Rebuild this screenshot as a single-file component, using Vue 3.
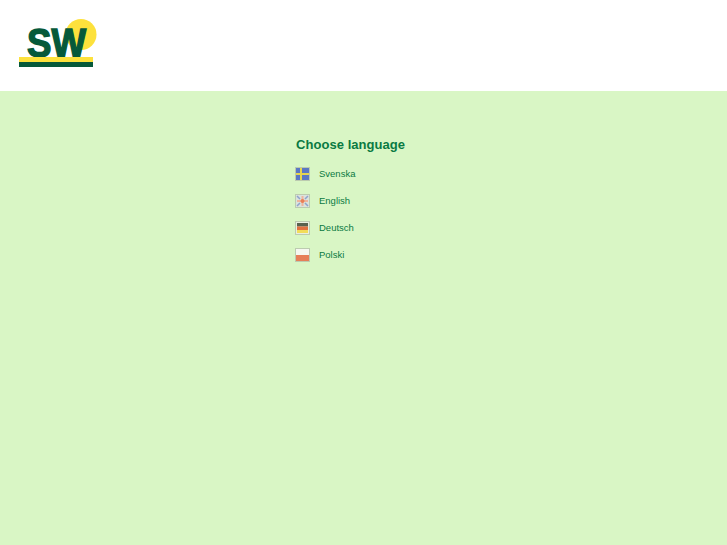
<script setup>
const languages = [
  { name: 'Svenska', code: 'se' },
  { name: 'English', code: 'en' },
  { name: 'Deutsch', code: 'de' },
  { name: 'Polski', code: 'pl' },
]
</script>

<template>
  <div class="page">
    <header class="header">
      <svg class="logo" width="78" height="50" viewBox="0 0 78 50">
        <circle cx="62" cy="15.5" r="15.5" fill="#fde13c" />
        <text x="8" y="37.5" class="logo-text" textLength="59" lengthAdjust="spacingAndGlyphs">SW</text>
        <rect x="0" y="38" width="74" height="5" fill="#fde13c" />
        <rect x="0" y="43" width="74" height="5" fill="#06593a" />
      </svg>
    </header>
    <main class="main">
      <section class="chooser">
        <h1 class="title">Choose language</h1>
        <ul class="list">
          <li v-for="l in languages" :key="l.code" class="item">
            <svg class="flag" width="15" height="14" viewBox="0 0 15 14">
              <rect width="15" height="14" fill="#bccbb0" />
              <g v-if="l.code === 'se'">
                <rect x="1" y="1" width="13" height="12" fill="#5b78c4" />
                <rect x="5" y="1" width="2" height="12" fill="#e6d550" />
                <rect x="1" y="6" width="13" height="2" fill="#e6d550" />
              </g>
              <g v-else-if="l.code === 'en'">
                <rect x="1" y="1" width="13" height="12" fill="#dbe3dc" />
                <path d="M2 2l3 3M13 2l-3 3M2 12l3-3M13 12l-3-3" stroke="#8ea3cc" stroke-width="1.5" />
                <path d="M7.5 2v10M2 7h11" stroke="#eeb59e" stroke-width="2" />
                <circle cx="7.5" cy="7" r="2" fill="#e87f58" />
              </g>
              <g v-else-if="l.code === 'de'">
                <rect x="1" y="1" width="13" height="12" fill="#e9efe0" />
                <rect x="2" y="2" width="11" height="3.5" fill="#59614e" />
                <rect x="2" y="5.5" width="11" height="3.5" fill="#e2703f" />
                <rect x="2" y="9" width="11" height="3" fill="#f2dc5a" />
              </g>
              <g v-else>
                <rect x="1" y="1" width="13" height="6" fill="#f6f8f0" />
                <rect x="1" y="7" width="13" height="6" fill="#e67f58" />
              </g>
            </svg>
            <a class="link" href="#">{{ l.name }}</a>
          </li>
        </ul>
      </section>
    </main>
  </div>
</template>

<style>
html, body { margin: 0; padding: 0; }
</style>

<style scoped>
.page {
  width: 727px;
  height: 545px;
  overflow: hidden;
  display: flex;
  flex-direction: column;
  font-family: "Liberation Sans", Arial, sans-serif;
  color: #0a7a42;
}
.header {
  height: 91px;
  background: #fff;
  padding: 19px 0 0 19px;
  box-sizing: border-box;
}
.logo { display: block; }
.logo-text {
  font-family: "Liberation Sans", Arial, sans-serif;
  font-weight: 700;
  font-size: 41px;
  fill: #06593a;
  stroke: #06593a;
  stroke-width: 1.5px;
}
.main {
  flex: 1;
  background: #d9f6c5;
  padding: 46px 0 0 295px;
}
.title {
  margin: 0 0 0 1px;
  font-size: 13px;
  line-height: 16px;
  font-weight: 700;
  letter-spacing: 0.05px;
}
.list {
  list-style: none;
  margin: 14px 0 0;
  padding: 0;
  display: flex;
  flex-direction: column;
  gap: 13px;
}
.item {
  display: flex;
  align-items: center;
  gap: 9px;
  height: 14px;
}
.flag { display: block; flex: none; }
.link {
  font-size: 9.5px;
  color: #0a7a42;
  text-decoration: none;
  margin-bottom: 2px;
}
</style>
